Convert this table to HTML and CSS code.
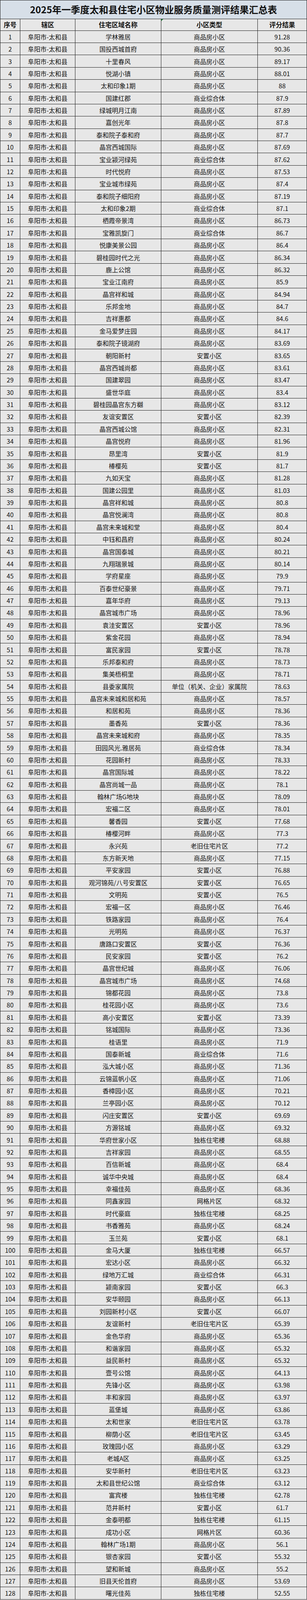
FILE: index.html
```html
<!DOCTYPE html>
<html lang="zh-CN">
<head>
<meta charset="utf-8">
<meta name="viewport" content="width=device-width, initial-scale=1">
<title>2025年一季度太和县住宅小区物业服务质量测评结果汇总表</title>
<link rel="stylesheet" href="styles.css">
</head>
<body>
<div class="sheet" role="table">
<div class="title" role="caption">2025年一季度太和县住宅小区物业服务质量测评结果汇总表</div>
<div class="row head" role="row"><span>序号</span><span>辖区</span><span>住宅区域名称</span><span class="flagged">小区类型</span><span>评分结果</span></div>
<div class="row"><span>1</span><span>阜阳市-太和县</span><span>学林雅居</span><span>商品房小区</span><span>91.28</span></div>
<div class="row"><span>2</span><span>阜阳市-太和县</span><span>国投西城首府</span><span>商品房小区</span><span>90.36</span></div>
<div class="row"><span>3</span><span>阜阳市-太和县</span><span>十里春风</span><span>商品房小区</span><span>89.17</span></div>
<div class="row"><span>4</span><span>阜阳市-太和县</span><span>悦湖小镇</span><span>商品房小区</span><span>88.01</span></div>
<div class="row"><span>5</span><span>阜阳市-太和县</span><span>太和印象1期</span><span>商品房小区</span><span>88</span></div>
<div class="row"><span>6</span><span>阜阳市-太和县</span><span>国建红郡</span><span>商业综合体</span><span>87.9</span></div>
<div class="row"><span>7</span><span>阜阳市-太和县</span><span>绿城明月江南</span><span>商品房小区</span><span>87.89</span></div>
<div class="row"><span>8</span><span>阜阳市-太和县</span><span>嘉创光年</span><span>商品房小区</span><span>87.8</span></div>
<div class="row"><span>9</span><span>阜阳市-太和县</span><span>泰和院子泰和府</span><span>商品房小区</span><span>87.7</span></div>
<div class="row"><span>10</span><span>阜阳市-太和县</span><span>晶宫西城国际</span><span>商品房小区</span><span>87.69</span></div>
<div class="row"><span>11</span><span>阜阳市-太和县</span><span>宝业颍河绿苑</span><span>商业综合体</span><span>87.62</span></div>
<div class="row"><span>12</span><span>阜阳市-太和县</span><span>时代悦府</span><span>商品房小区</span><span>87.53</span></div>
<div class="row"><span>13</span><span>阜阳市-太和县</span><span>宝业城市绿苑</span><span>商品房小区</span><span>87.4</span></div>
<div class="row"><span>14</span><span>阜阳市-太和县</span><span>泰和院子细阳府</span><span>商品房小区</span><span>87.19</span></div>
<div class="row"><span>15</span><span>阜阳市-太和县</span><span>太和印象2期</span><span>商业综合体</span><span>87.1</span></div>
<div class="row"><span>16</span><span>阜阳市-太和县</span><span>栖霞帝景湾</span><span>商品房小区</span><span>86.73</span></div>
<div class="row"><span>17</span><span>阜阳市-太和县</span><span>宝雅凯旋门</span><span>商业综合体</span><span>86.7</span></div>
<div class="row"><span>18</span><span>阜阳市-太和县</span><span>悦康美景公园</span><span>商品房小区</span><span>86.4</span></div>
<div class="row"><span>19</span><span>阜阳市-太和县</span><span>碧桂园时代之光</span><span>商品房小区</span><span>86.34</span></div>
<div class="row"><span>20</span><span>阜阳市-太和县</span><span>鹿上公馆</span><span>商品房小区</span><span>86.32</span></div>
<div class="row"><span>21</span><span>阜阳市-太和县</span><span>宝业江南府</span><span>商品房小区</span><span>85.9</span></div>
<div class="row"><span>22</span><span>阜阳市-太和县</span><span>晶宫祥和城</span><span>商品房小区</span><span>84.94</span></div>
<div class="row"><span>23</span><span>阜阳市-太和县</span><span>乐邦金地</span><span>商品房小区</span><span>84.7</span></div>
<div class="row"><span>24</span><span>阜阳市-太和县</span><span>吉祥惠都</span><span>商品房小区</span><span>84.6</span></div>
<div class="row"><span>25</span><span>阜阳市-太和县</span><span>金马爱梦庄园</span><span>商品房小区</span><span>84.17</span></div>
<div class="row"><span>26</span><span>阜阳市-太和县</span><span>泰和院子镜湖府</span><span>商品房小区</span><span>83.69</span></div>
<div class="row"><span>27</span><span>阜阳市-太和县</span><span>朝阳新村</span><span>安置小区</span><span>83.65</span></div>
<div class="row"><span>28</span><span>阜阳市-太和县</span><span>晶宫西城尚都</span><span>商品房小区</span><span>83.61</span></div>
<div class="row"><span>29</span><span>阜阳市-太和县</span><span>国建翠园</span><span>商品房小区</span><span>83.47</span></div>
<div class="row"><span>30</span><span>阜阳市-太和县</span><span>盛世华庭</span><span>商品房小区</span><span>83.4</span></div>
<div class="row"><span>31</span><span>阜阳市-太和县</span><span>碧桂园晶宫东方樾</span><span>商品房小区</span><span>83.12</span></div>
<div class="row"><span>32</span><span>阜阳市-太和县</span><span>友谊安置区</span><span>安置小区</span><span>82.39</span></div>
<div class="row"><span>33</span><span>阜阳市-太和县</span><span>晶宫西城公馆</span><span>商品房小区</span><span>82.31</span></div>
<div class="row"><span>34</span><span>阜阳市-太和县</span><span>晶宫悦府</span><span>商品房小区</span><span>81.96</span></div>
<div class="row"><span>35</span><span>阜阳市-太和县</span><span>昂里湾</span><span>安置小区</span><span>81.9</span></div>
<div class="row"><span>36</span><span>阜阳市-太和县</span><span>椿樱苑</span><span>安置小区</span><span>81.7</span></div>
<div class="row"><span>37</span><span>阜阳市-太和县</span><span>九如天宝</span><span>商品房小区</span><span>81.28</span></div>
<div class="row"><span>38</span><span>阜阳市-太和县</span><span>国建公园里</span><span>商品房小区</span><span>81.03</span></div>
<div class="row"><span>39</span><span>阜阳市-太和县</span><span>晶宫祥和城</span><span>商品房小区</span><span>80.8</span></div>
<div class="row"><span>40</span><span>阜阳市-太和县</span><span>晶宫悦澜湾</span><span>商品房小区</span><span>80.8</span></div>
<div class="row"><span>41</span><span>阜阳市-太和县</span><span>晶宫未来城和堂</span><span>商品房小区</span><span>80.4</span></div>
<div class="row"><span>42</span><span>阜阳市-太和县</span><span>中钰和昌府</span><span>商品房小区</span><span>80.24</span></div>
<div class="row"><span>43</span><span>阜阳市-太和县</span><span>晶宫国泰城</span><span>商品房小区</span><span>80.21</span></div>
<div class="row"><span>44</span><span>阜阳市-太和县</span><span>九翔瑞景城</span><span>商品房小区</span><span>80.14</span></div>
<div class="row"><span>45</span><span>阜阳市-太和县</span><span>学府星座</span><span>商品房小区</span><span>79.9</span></div>
<div class="row"><span>46</span><span>阜阳市-太和县</span><span>百泰世纪豪景</span><span>商品房小区</span><span>79.71</span></div>
<div class="row"><span>47</span><span>阜阳市-太和县</span><span>嘉年华府</span><span>商品房小区</span><span>79.13</span></div>
<div class="row"><span>48</span><span>阜阳市-太和县</span><span>晶宫城市广场</span><span>商品房小区</span><span>78.96</span></div>
<div class="row"><span>49</span><span>阜阳市-太和县</span><span>袁洼安置区</span><span>安置小区</span><span>78.96</span></div>
<div class="row"><span>50</span><span>阜阳市-太和县</span><span>紫金花园</span><span>商品房小区</span><span>78.94</span></div>
<div class="row"><span>51</span><span>阜阳市-太和县</span><span>富民家园</span><span>安置小区</span><span>78.78</span></div>
<div class="row"><span>52</span><span>阜阳市-太和县</span><span>乐邦泰和府</span><span>商品房小区</span><span>78.73</span></div>
<div class="row"><span>53</span><span>阜阳市-太和县</span><span>集美梧桐里</span><span>商品房小区</span><span>78.71</span></div>
<div class="row"><span>54</span><span>阜阳市-太和县</span><span>县委家属院</span><span>单位（机关、企业）家属院</span><span>78.63</span></div>
<div class="row"><span>55</span><span>阜阳市-太和县</span><span>晶宫未来城和居和苑</span><span>商品房小区</span><span>78.57</span></div>
<div class="row"><span>56</span><span>阜阳市-太和县</span><span>和居和苑</span><span>商品房小区</span><span>78.36</span></div>
<div class="row"><span>57</span><span>阜阳市-太和县</span><span>墨香苑</span><span>安置小区</span><span>78.36</span></div>
<div class="row"><span>58</span><span>阜阳市-太和县</span><span>晶宫未来城和府</span><span>商品房小区</span><span>78.35</span></div>
<div class="row"><span>59</span><span>阜阳市-太和县</span><span>田园风光.雅居苑</span><span>商业综合体</span><span>78.34</span></div>
<div class="row"><span>60</span><span>阜阳市-太和县</span><span>花园新村</span><span>商品房小区</span><span>78.33</span></div>
<div class="row"><span>61</span><span>阜阳市-太和县</span><span>晶宫国际城</span><span>商品房小区</span><span>78.22</span></div>
<div class="row"><span>62</span><span>阜阳市-太和县</span><span>晶宫尚城一品</span><span>商品房小区</span><span>78.1</span></div>
<div class="row"><span>63</span><span>阜阳市-太和县</span><span>翰林广场G地块</span><span>商品房小区</span><span>78.09</span></div>
<div class="row"><span>64</span><span>阜阳市-太和县</span><span>宏福二区</span><span>商品房小区</span><span>78.01</span></div>
<div class="row"><span>65</span><span>阜阳市-太和县</span><span>馨香园</span><span>安置小区</span><span>77.68</span></div>
<div class="row"><span>66</span><span>阜阳市-太和县</span><span>椿樱河畔</span><span>商品房小区</span><span>77.3</span></div>
<div class="row"><span>67</span><span>阜阳市-太和县</span><span>永兴苑</span><span>老旧住宅片区</span><span>77.2</span></div>
<div class="row"><span>68</span><span>阜阳市-太和县</span><span>东方新天地</span><span>商品房小区</span><span>77.15</span></div>
<div class="row"><span>69</span><span>阜阳市-太和县</span><span>平安家园</span><span>安置小区</span><span>76.88</span></div>
<div class="row"><span>70</span><span>阜阳市-太和县</span><span>观河锦苑/八号安置区</span><span>安置小区</span><span>76.65</span></div>
<div class="row"><span>71</span><span>阜阳市-太和县</span><span>文明苑</span><span>安置小区</span><span>76.5</span></div>
<div class="row"><span>72</span><span>阜阳市-太和县</span><span>宏福一区</span><span>商品房小区</span><span>76.46</span></div>
<div class="row"><span>73</span><span>阜阳市-太和县</span><span>铁路家园</span><span>商品房小区</span><span>76.4</span></div>
<div class="row"><span>74</span><span>阜阳市-太和县</span><span>光明苑</span><span>商品房小区</span><span>76.37</span></div>
<div class="row"><span>75</span><span>阜阳市-太和县</span><span>唐路口安置区</span><span>安置小区</span><span>76.36</span></div>
<div class="row"><span>76</span><span>阜阳市-太和县</span><span>民安家园</span><span>安置小区</span><span>76.2</span></div>
<div class="row"><span>77</span><span>阜阳市-太和县</span><span>晶宫世纪城</span><span>商品房小区</span><span>76.06</span></div>
<div class="row"><span>78</span><span>阜阳市-太和县</span><span>晶宫城市广场</span><span>商品房小区</span><span>74.68</span></div>
<div class="row"><span>79</span><span>阜阳市-太和县</span><span>锦都花园</span><span>商品房小区</span><span>73.8</span></div>
<div class="row"><span>80</span><span>阜阳市-太和县</span><span>桂花园小区</span><span>商品房小区</span><span>73.6</span></div>
<div class="row"><span>81</span><span>阜阳市-太和县</span><span>高小安置区</span><span>安置小区</span><span>73.39</span></div>
<div class="row"><span>82</span><span>阜阳市-太和县</span><span>铭城国际</span><span>商品房小区</span><span>73.36</span></div>
<div class="row"><span>83</span><span>阜阳市-太和县</span><span>桂语里</span><span>商品房小区</span><span>71.9</span></div>
<div class="row"><span>84</span><span>阜阳市-太和县</span><span>国泰新城</span><span>商业综合体</span><span>71.6</span></div>
<div class="row"><span>85</span><span>阜阳市-太和县</span><span>泓大城小区</span><span>商品房小区</span><span>71.36</span></div>
<div class="row"><span>86</span><span>阜阳市-太和县</span><span>云锦蓝帆小区</span><span>商品房小区</span><span>71.06</span></div>
<div class="row"><span>87</span><span>阜阳市-太和县</span><span>香樟园小区</span><span>商品房小区</span><span>70.21</span></div>
<div class="row"><span>88</span><span>阜阳市-太和县</span><span>兰亭园小区</span><span>商品房小区</span><span>70.12</span></div>
<div class="row"><span>89</span><span>阜阳市-太和县</span><span>闪庄安置区</span><span>安置小区</span><span>69.69</span></div>
<div class="row"><span>90</span><span>阜阳市-太和县</span><span>方源铭城</span><span>商品房小区</span><span>69.32</span></div>
<div class="row"><span>91</span><span>阜阳市-太和县</span><span>华府世家小区</span><span>独栋住宅楼</span><span>68.88</span></div>
<div class="row"><span>92</span><span>阜阳市-太和县</span><span>吉祥家园</span><span>商品房小区</span><span>68.55</span></div>
<div class="row"><span>93</span><span>阜阳市-太和县</span><span>百信新城</span><span>商品房小区</span><span>68.4</span></div>
<div class="row"><span>94</span><span>阜阳市-太和县</span><span>诚华中央城</span><span>商品房小区</span><span>68.4</span></div>
<div class="row"><span>95</span><span>阜阳市-太和县</span><span>幸福佳苑</span><span>商品房小区</span><span>68.36</span></div>
<div class="row"><span>96</span><span>阜阳市-太和县</span><span>同鑫家园</span><span>网格片区</span><span>68.32</span></div>
<div class="row"><span>97</span><span>阜阳市-太和县</span><span>时代豪庭</span><span>独栋住宅楼</span><span>68.25</span></div>
<div class="row"><span>98</span><span>阜阳市-太和县</span><span>书香雅苑</span><span>商品房小区</span><span>68.24</span></div>
<div class="row"><span>99</span><span>阜阳市-太和县</span><span>玉兰苑</span><span>安置小区</span><span>68.1</span></div>
<div class="row"><span>100</span><span>阜阳市-太和县</span><span>金马大厦</span><span>独栋住宅楼</span><span>66.57</span></div>
<div class="row"><span>101</span><span>阜阳市-太和县</span><span>宏达小区</span><span>商品房小区</span><span>66.32</span></div>
<div class="row"><span>102</span><span>阜阳市-太和县</span><span>绿地万汇城</span><span>商业综合体</span><span>66.31</span></div>
<div class="row"><span>103</span><span>阜阳市-太和县</span><span>颍南家园</span><span>安置小区</span><span>66.3</span></div>
<div class="row"><span>104</span><span>阜阳市-太和县</span><span>安华颐园</span><span>商品房小区</span><span>66.13</span></div>
<div class="row"><span>105</span><span>阜阳市-太和县</span><span>刘园新村小区</span><span>安置小区</span><span>66.07</span></div>
<div class="row"><span>106</span><span>阜阳市-太和县</span><span>友谊新村</span><span>老旧住宅片区</span><span>65.39</span></div>
<div class="row"><span>107</span><span>阜阳市-太和县</span><span>金色华府</span><span>商品房小区</span><span>65.36</span></div>
<div class="row"><span>108</span><span>阜阳市-太和县</span><span>和谐家园</span><span>商品房小区</span><span>65.32</span></div>
<div class="row"><span>109</span><span>阜阳市-太和县</span><span>益民新村</span><span>商品房小区</span><span>65.32</span></div>
<div class="row"><span>110</span><span>阜阳市-太和县</span><span>壹号公馆</span><span>商品房小区</span><span>64.13</span></div>
<div class="row"><span>111</span><span>阜阳市-太和县</span><span>先锋小区</span><span>商品房小区</span><span>63.98</span></div>
<div class="row"><span>112</span><span>阜阳市-太和县</span><span>丰和家园</span><span>商品房小区</span><span>63.97</span></div>
<div class="row"><span>113</span><span>阜阳市-太和县</span><span>蓝堡城</span><span>商品房小区</span><span>63.86</span></div>
<div class="row"><span>114</span><span>阜阳市-太和县</span><span>太和世家</span><span>老旧住宅片区</span><span>63.78</span></div>
<div class="row"><span>115</span><span>阜阳市-太和县</span><span>柳荫小区</span><span>老旧住宅片区</span><span>63.45</span></div>
<div class="row"><span>116</span><span>阜阳市-太和县</span><span>玫瑰园小区</span><span>商品房小区</span><span>63.29</span></div>
<div class="row"><span>117</span><span>阜阳市-太和县</span><span>老城A区</span><span>商品房小区</span><span>63.25</span></div>
<div class="row"><span>118</span><span>阜阳市-太和县</span><span>安华新村</span><span>老旧住宅片区</span><span>63.23</span></div>
<div class="row"><span>119</span><span>阜阳市-太和县</span><span>太和县世纪公馆</span><span>商业综合体</span><span>63.12</span></div>
<div class="row"><span>120</span><span>阜阳市-太和县</span><span>富宾楼</span><span>独栋住宅楼</span><span>62.78</span></div>
<div class="row"><span>121</span><span>阜阳市-太和县</span><span>范井新村</span><span>安置小区</span><span>61.7</span></div>
<div class="row"><span>122</span><span>阜阳市-太和县</span><span>金泰明都</span><span>独栋住宅楼</span><span>61.15</span></div>
<div class="row"><span>123</span><span>阜阳市-太和县</span><span>成功小区</span><span>网格片区</span><span>60.36</span></div>
<div class="row"><span>124</span><span>阜阳市-太和县</span><span>翰林广场1期</span><span>商品房小区</span><span>56.1</span></div>
<div class="row"><span>125</span><span>阜阳市-太和县</span><span>银杏家园</span><span>安置小区</span><span>55.32</span></div>
<div class="row"><span>126</span><span>阜阳市-太和县</span><span>望和新城</span><span>商品房小区</span><span>55.2</span></div>
<div class="row"><span>127</span><span>阜阳市-太和县</span><span>旧县天伦首府</span><span>商品房小区</span><span>53.69</span></div>
<div class="row"><span>128</span><span>阜阳市-太和县</span><span>曙光佳苑</span><span>独栋住宅楼</span><span>52.55</span></div>
</div>
</body>
</html>
```

FILE: styles.css
```css
:root {
  /* one reference pixel of height, measured against the 5220px-tall window */
  --v: calc(100vh / 5220);
  --line: #1e1e1e;
  scrollbar-width: none;
}

html, body {
  margin: 0;
  padding: 0;
  background: #ffffff;
}

.sheet {
  box-sizing: border-box;
  width: 786px;
  border-top: 1px solid var(--line);
  border-left: 1px solid var(--line);
  font-family: "Noto Sans CJK SC", "Noto Sans", sans-serif;
  color: #141414;
  font-size: 16px;
  line-height: 1;
}

.title {
  box-sizing: border-box;
  height: calc(61 * var(--v));
  display: flex;
  align-items: center;
  justify-content: center;
  background: #d7dfe8;
  border-right: 1px solid var(--line);
  border-bottom: 1px solid var(--line);
  font-size: 24px;
  font-weight: 700;
  color: #111111;
  white-space: nowrap;
  overflow: hidden;
}

.row {
  display: grid;
  grid-template-columns: 51px 141px 220px 247px 126px;
  height: calc(40 * var(--v));
  overflow: hidden;
}

.row > span {
  box-sizing: border-box;
  display: flex;
  align-items: center;
  justify-content: center;
  height: 100%;
  min-width: 0;
  background: #e7e7e7;
  border-right: 1px solid var(--line);
  border-bottom: 1px solid var(--line);
  white-space: nowrap;
  overflow: hidden;
}

.head {
  height: calc(38 * var(--v));
}

.head > span {
  font-weight: 700;
  font-size: 16.5px;
}

.flagged {
  position: relative;
}

.flagged::before {
  content: "";
  position: absolute;
  left: 0;
  top: 0;
  width: 0;
  height: 0;
  border-top: 5px solid #1f8a3a;
  border-right: 5px solid transparent;
}
```
